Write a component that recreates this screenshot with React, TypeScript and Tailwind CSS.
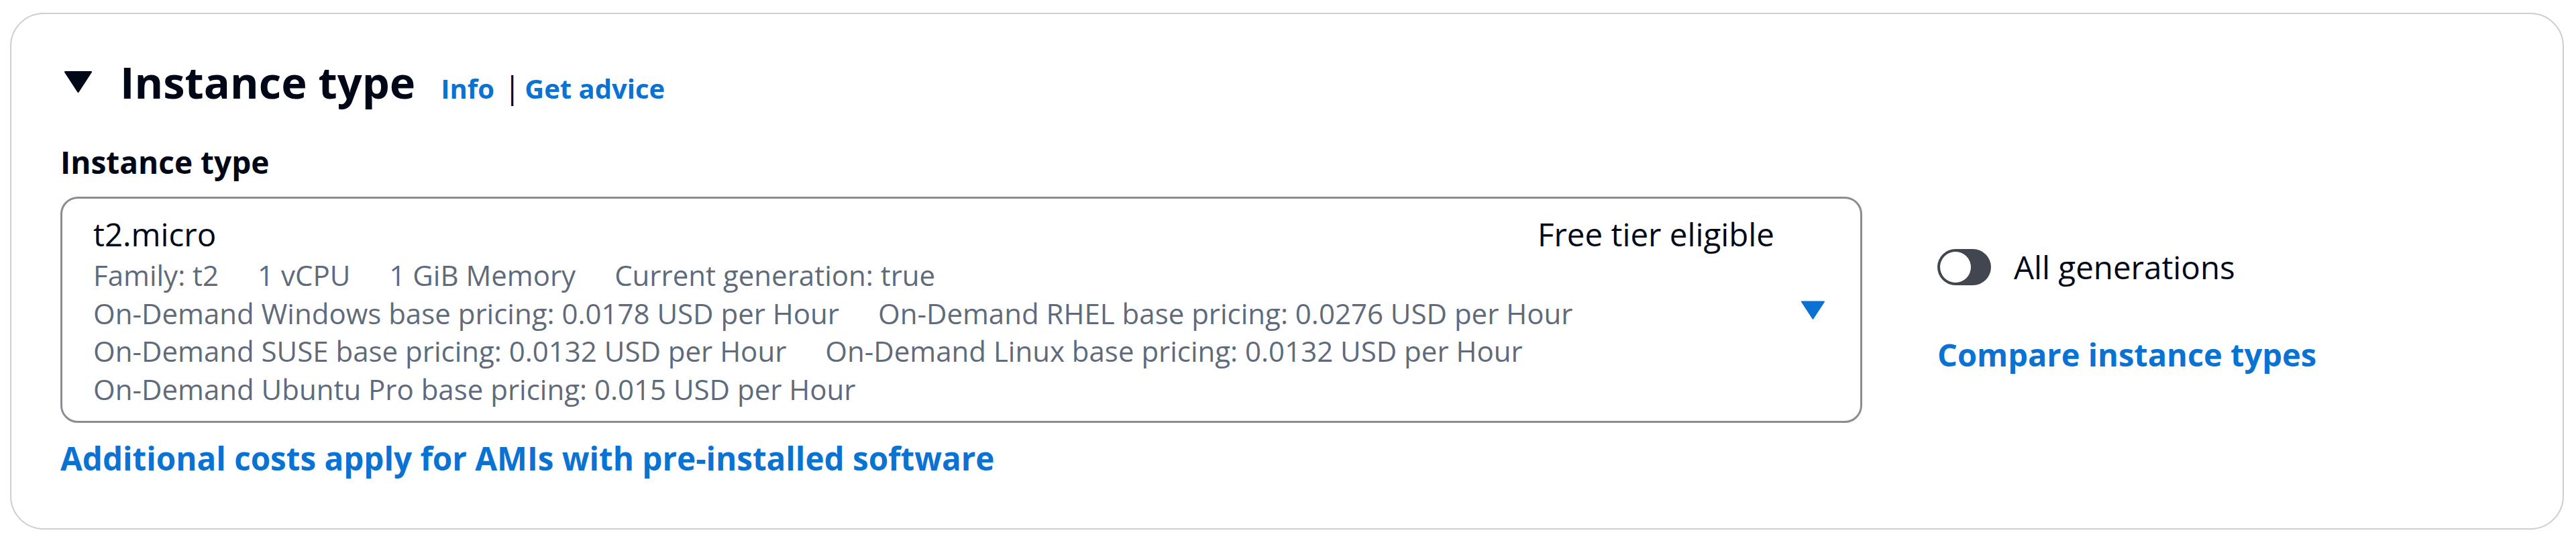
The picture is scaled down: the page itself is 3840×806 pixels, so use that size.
import React from 'react';

const rowsPricing: string[][] = [
  ['Family: t2', '1 vCPU', '1 GiB Memory', 'Current generation: true'],
  [
    'On-Demand Windows base pricing: 0.0178 USD per Hour',
    'On-Demand RHEL base pricing: 0.0276 USD per Hour',
  ],
  [
    'On-Demand SUSE base pricing: 0.0132 USD per Hour',
    'On-Demand Linux base pricing: 0.0132 USD per Hour',
  ],
  ['On-Demand Ubuntu Pro base pricing: 0.015 USD per Hour'],
];

const CaretDown: React.FC<{ className?: string; color: string }> = ({ className, color }) => (
  <svg className={className} viewBox="0 0 36 28" fill={color}>
    <path d="M1 1 L35 1 L18 27 Z" strokeLinejoin="round" stroke={color} strokeWidth="2" />
  </svg>
);

const Toggle: React.FC = () => (
  <div className="relative w-[80px] h-[54px] rounded-full bg-[#424650] shrink-0">
    <div className="absolute left-[4px] top-[4px] w-[46px] h-[46px] rounded-full bg-white" />
  </div>
);

export default function App() {
  return (
    <div
      className="bg-white pt-[19px] pb-[18px] pl-[15px] pr-[18px]"
      style={{ fontFamily: '"Open Sans", "Noto Sans", sans-serif' }}
    >
      <div className="rounded-[50px] border-2 border-[#cdcdd2] pt-[57px] pb-[71px] px-[73px]">
        {/* Header */}
        <div className="flex items-baseline h-[88px]">
          <CaretDown className="self-center w-[43px] h-[32px] ml-[5px] mr-[41px]" color="#000716" />
          <h2 className="text-[65px] leading-[88px] font-bold text-[#000716]">Instance type</h2>
          <a className="ml-[38px] text-[40px] font-bold text-[#0972d3]">Info</a>
          <span className="ml-[14px] text-[46px] text-[#000716]">|</span>
          <a className="ml-[6px] text-[40px] font-bold text-[#0972d3]">Get advice</a>
        </div>

        {/* Field label */}
        <div className="mt-[43px] text-[46px] leading-[64px] font-bold text-[#000716]">Instance type</div>

        <div className="mt-[20px] flex items-start">
          {/* Select */}
          <div className="w-[2686px] shrink-0 flex items-center rounded-[26px] border-[3px] border-[#8c8c94] pt-[20px] pb-[19px] pl-[46px] pr-[53px]">
            <div className="flex-1 min-w-0">
              <div className="flex justify-between text-[47.5px] leading-[66px] text-[#000716]">
                <span>t2.micro</span>
                <span>Free tier eligible</span>
              </div>
              {rowsPricing.map((row, i) => (
                <div key={i} className="flex gap-[58px] text-[42px] leading-[56.5px] text-[#5f6b7a] whitespace-nowrap">
                  {row.map((item) => (
                    <span key={item}>{item}</span>
                  ))}
                </div>
              ))}
            </div>
            <CaretDown className="ml-[40px] w-[35px] h-[28px] shrink-0" color="#0972d3" />
          </div>

          {/* Side controls */}
          <div className="ml-[112px] pt-[72px]">
            <div className="flex items-center gap-[34px] h-[66px]">
              <Toggle />
              <span className="text-[47.5px] leading-[66px] text-[#000716]">All generations</span>
            </div>
            <a className="block mt-[64px] text-[47px] leading-[66px] font-bold text-[#0972d3]">
              Compare instance types
            </a>
          </div>
        </div>

        <a className="block mt-[20px] text-[47.6px] leading-[66px] font-bold text-[#0972d3]">
          Additional costs apply for AMIs with pre-installed software
        </a>
      </div>
    </div>
  );
}
